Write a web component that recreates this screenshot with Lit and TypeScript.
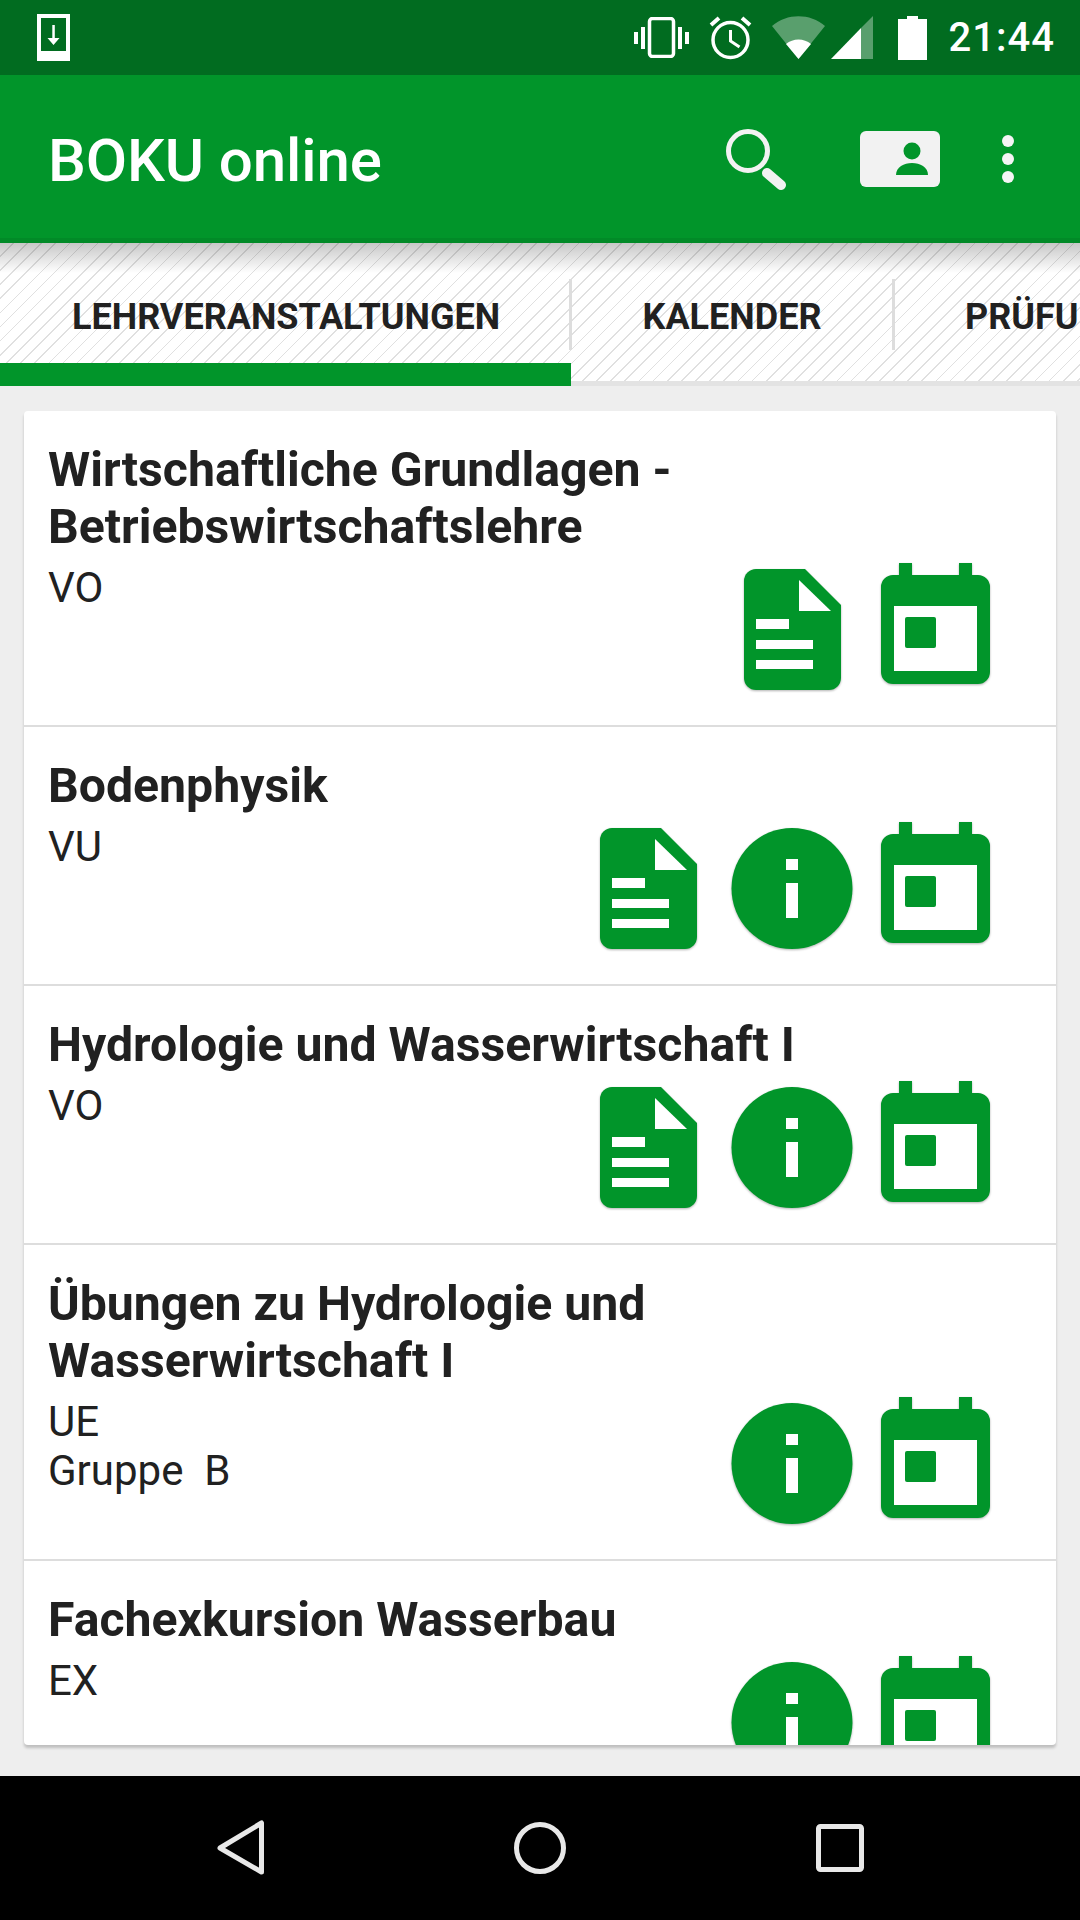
import { LitElement, html, css, svg } from "lit";
import { customElement } from "lit/decorators.js";

const docIcon = svg`<svg class="ic" viewBox="-2 0 144 127" width="144" height="127"><path fill="#01952a" d="M35 6H84L120 42V115a12 12 0 0 1-12 12H35a12 12 0 0 1-12-12V18A12 12 0 0 1 35 6Z"/><path fill="#fff" d="M78 17L110 48H78Z"/><path fill="#fff" d="M35 56H68V66H35ZM35 77H92V86H35ZM35 97H92V106H35Z"/></svg>`;
const infoIcon = svg`<svg class="ic" viewBox="-1 0 144 127" width="144" height="127"><circle cx="72" cy="66.500" r="60.500" fill="#01952a"/><path fill="#fff" d="M66 37H78V48H66ZM66 61H78V96H66Z"/></svg>`;
const calIcon = svg`<svg class="ic" viewBox="0 0 144 127" width="144" height="127"><path fill="#01952a" d="M36 0H49V12H96V0H109V12H115a12 12 0 0 1 12 12V109a12 12 0 0 1-12 12H30a12 12 0 0 1-12-12V24A12 12 0 0 1 30 12H36Z"/><path fill="#fff" d="M31 43H114V108H31Z"/><rect x="42" y="54" width="31" height="31" rx="2" fill="#01952a"/></svg>`;

const rows = [
  { t: ["Wirtschaftliche Grundlagen -", "Betriebswirtschaftslehre"], s: ["VO"], i: "dc" },
  { t: ["Bodenphysik"], s: ["VU"], i: "dic" },
  { t: ["Hydrologie und Wasserwirtschaft I"], s: ["VO"], i: "dic" },
  { t: ["Übungen zu Hydrologie und", "Wasserwirtschaft I"], s: ["UE", "Gruppe  B"], i: "ic" },
  { t: ["Fachexkursion Wasserbau"], s: ["EX"], i: "ic" },
];

@customElement("app-root")
export class AppRoot extends LitElement {
  static styles = css`
    :host { display: flex; flex-direction: column; width: 1080px; height: 1920px; font-family: Roboto, "Liberation Sans", sans-serif; color: #212121; background: #eee; overflow: hidden; }
    svg { display: block; flex: none; }
    .status { height: 75px; flex: none; background: #016c20; display: flex; align-items: center; padding: 0 25px 0 37px; color: #fff; box-sizing: border-box; }
    .status .dl { margin-right: auto; }
    .vib { margin-right: 20px; }
    .alarm { margin-right: 20px; }
    .wifi { margin-right: 6px; }
    .sig { margin-right: 25px; }
    .time { font-size: 40px; font-weight: 500; margin-left: 22px; letter-spacing: 1px; line-height: 75px; }
    .bar { height: 168px; flex: none; box-sizing: border-box; background: #01952a; border-bottom: 5px solid #018a27; display: flex; align-items: center; padding: 0 64px 0 48px; color: #fff; }
    .title { flex: 1; font-size: 60px; font-weight: 500; margin-top: 7px; letter-spacing: -0.1px; }
    .srch { margin-right: 74px; margin-top: 7px; }
    .idc { margin-right: 60px; margin-top: 5px; }
    .dots { margin-top: 5px; }
    .tabs { position: relative; height: 143px; flex: none; display: flex; overflow: hidden; background-color: #fff; background-image: repeating-linear-gradient(135deg, #fff 0 8.8px, #e0e0e0 8.8px 10px); font-size: 36px; font-weight: 700; }
    .tabs::before { content: ""; position: absolute; left: 0; right: 0; top: 0; height: 30px; background: linear-gradient(rgba(0,0,0,.22), rgba(0,0,0,0)); }
    .band { position: absolute; left: 0; right: 0; bottom: 0; height: 5px; background: #e3e3e3; }
    .ind { position: absolute; left: 0; bottom: 0; width: 571px; height: 23px; background: #01952a; }
    .tab { flex: none; box-sizing: border-box; padding-top: 51px; line-height: 46px; white-space: nowrap; }
    .t1 { width: 569px; padding-left: 72px; }
    .t2 { width: 320px; text-align: center; }
    .t3 { padding-left: 70px; }
    .sep { flex: none; width: 3px; height: 71px; margin-top: 36px; background: #ddd; }
    .main { flex: 1; min-height: 0; padding: 25px 24px 31px; display: flex; flex-direction: column; }
    .card { flex: 1; min-height: 0; overflow: hidden; background: #fff; border-radius: 4px; box-shadow: 0 3px 3px rgba(0,0,0,.2); }
    .row { box-sizing: border-box; padding: 30px 49px 35px 24px; border-bottom: 2px solid #ddd; }
    .row:last-child { border-bottom: none; }
    .rt { font-size: 48.2px; font-weight: 700; line-height: 57px; }
    .rb { display: flex; justify-content: space-between; margin-top: 8px; }
    .sub { font-size: 42px; line-height: 49px; white-space: pre; }
    .icons { display: flex; }
    .ic { filter: drop-shadow(0 1px 1px rgba(0,0,0,.3)); }
    .nav { height: 144px; flex: none; background: #000; display: flex; justify-content: center; align-items: center; }
    .nc { width: 300px; display: flex; justify-content: center; }
  `;

  render() {
    const map: Record<string, unknown> = { d: docIcon, i: infoIcon, c: calIcon };
    return html`
      <div class="status">
        <svg class="dl" width="33" height="47" viewBox="0 0 33 47"><path fill="#fff" fill-rule="evenodd" d="M0 0H33V47H0ZM4 4V37H29V4Z"/><path fill="#fff" d="M15.300 11H17.800V24H22.500L16.500 31L10.500 24H15.300Z"/></svg>
        <svg class="vib" width="55" height="41" viewBox="0 0 55 41"><rect x="15.500" y="1.500" width="24" height="38" rx="3" fill="none" stroke="#fff" stroke-width="3.500"/><path fill="#fff" d="M0 15H4V27H0ZM7 10H11V32H7ZM44 10H48V32H44ZM51 15H55V27H51Z"/></svg>
        <svg class="alarm" width="43" height="44" viewBox="0 0 43 44"><circle cx="21.500" cy="24" r="17.500" fill="none" stroke="#fff" stroke-width="3.500"/><path d="M21.500 14V25L30.500 31" fill="none" stroke="#fff" stroke-width="3"/><path d="M2 9L10 2M41 9L33 2" stroke="#fff" stroke-width="4" fill="none"/></svg>
        <svg class="wifi" width="53" height="43" viewBox="0 0 53 43"><path fill="#fff" fill-opacity=".35" d="M0 10C15-3 38-3 53 10L26.500 43Z"/><path fill="#fff" d="M14 28C21 22 32 22 39 28L26.500 43Z"/></svg>
        <svg class="sig" width="42" height="43" viewBox="0 0 42 43"><path fill="#fff" fill-opacity=".35" d="M42 0V43H30V12Z"/><path fill="#fff" d="M30 12V43H0Z"/></svg>
        <svg class="bat" width="29" height="44" viewBox="0 0 29 44"><path fill="#fff" d="M9 0H20V3H29V44H0V3H9Z"/></svg>
        <span class="time">21:44</span>
      </div>
      <div class="bar">
        <div class="title">BOKU online</div>
        <svg class="srch" width="60" height="62" viewBox="0 0 60 62"><circle cx="22" cy="22" r="19.500" fill="none" stroke="#f2f2f2" stroke-width="5"/><path d="M41 44L55 56" stroke="#f2f2f2" stroke-width="10" stroke-linecap="round"/></svg>
        <svg class="idc" width="80" height="56" viewBox="0 0 80 56"><rect width="80" height="56" rx="6" fill="#f2f2f2"/><circle cx="52" cy="20" r="8.500" fill="#01952a"/><path fill="#01952a" d="M36 44C36 36 44 32 52 32C60 32 68 36 68 44Z"/></svg>
        <svg class="dots" width="16" height="48" viewBox="0 0 16 48"><circle cx="8" cy="6" r="6" fill="#f5f5f5"/><circle cx="8" cy="24" r="6" fill="#f5f5f5"/><circle cx="8" cy="42" r="6" fill="#f5f5f5"/></svg>
      </div>
      <div class="tabs">
        <div class="band"></div>
        <div class="ind"></div>
        <div class="tab t1">LEHRVERANSTALTUNGEN</div>
        <div class="sep"></div>
        <div class="tab t2">KALENDER</div>
        <div class="sep"></div>
        <div class="tab t3">PRÜFUNGEN</div>
      </div>
      <div class="main">
        <div class="card">
          ${rows.map((r) => html`
            <div class="row">
              <div class="rt">${r.t.map((l) => html`<div>${l}</div>`)}</div>
              <div class="rb">
                <div class="sub">${r.s.map((l) => html`<div>${l}</div>`)}</div>
                <div class="icons">${r.i.split("").map((k) => map[k])}</div>
              </div>
            </div>`)}
        </div>
      </div>
      <div class="nav">
        <div class="nc"><svg width="60" height="60" viewBox="0 0 60 60"><path d="M51.500 5V54L10 30Z" fill="none" stroke="#e8e8e8" stroke-width="5" stroke-linejoin="round"/></svg></div>
        <div class="nc"><svg width="60" height="60" viewBox="0 0 60 60"><circle cx="30" cy="30" r="23.500" fill="none" stroke="#e8e8e8" stroke-width="5"/></svg></div>
        <div class="nc"><svg width="60" height="60" viewBox="0 0 60 60"><rect x="8.500" y="8.500" width="43" height="43" rx="2" fill="none" stroke="#e8e8e8" stroke-width="5"/></svg></div>
      </div>
    `;
  }
}
